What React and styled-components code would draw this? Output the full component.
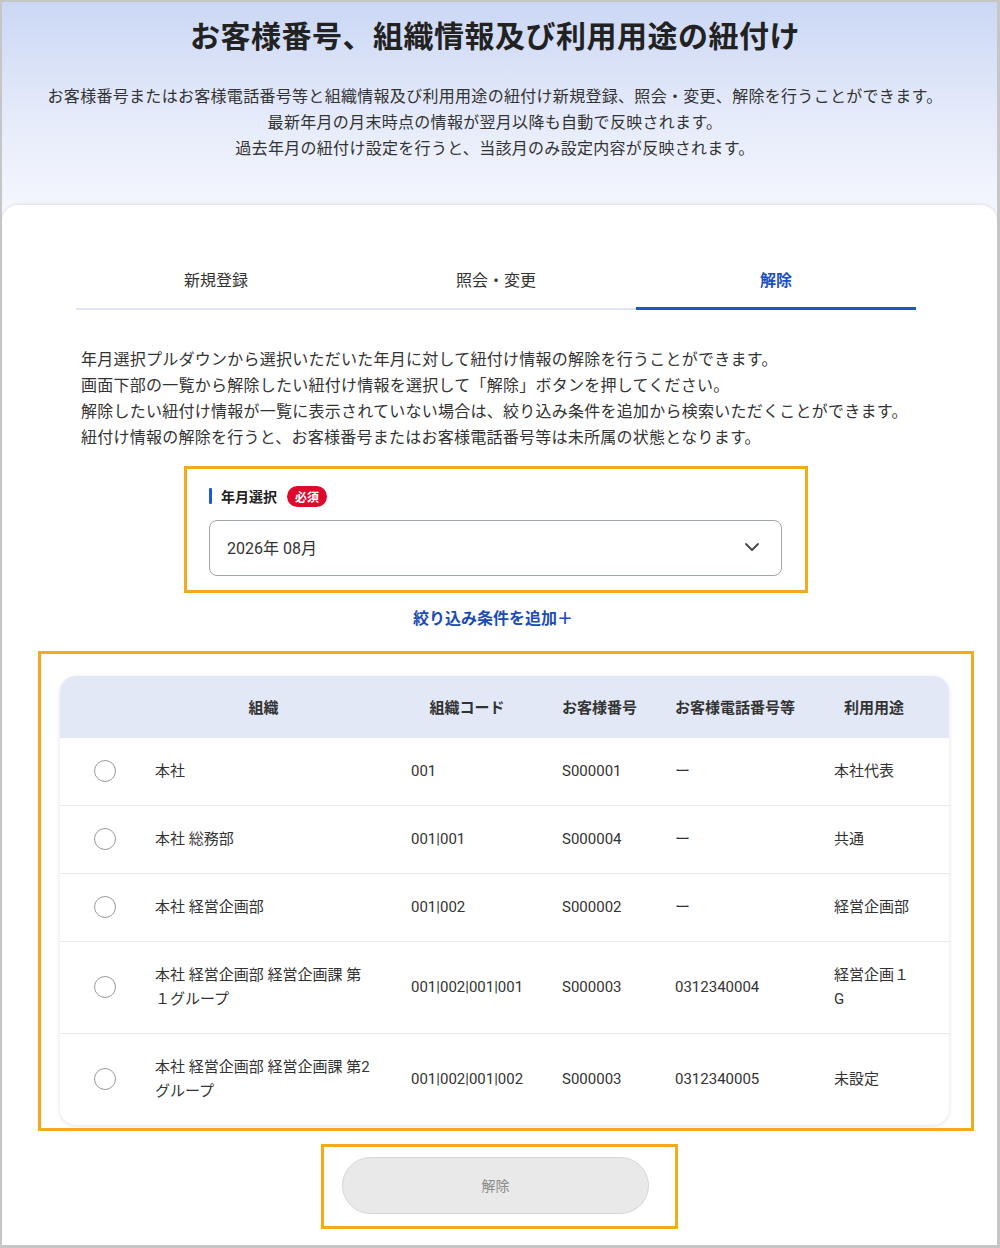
import React from 'react'
import styled, { createGlobalStyle } from 'styled-components'
import { ChevronDown } from 'lucide-react'

const GlobalStyle = createGlobalStyle`
	* {
		box-sizing: border-box;
	}
	body {
		margin: 0;
		background: #fff;
		font-family: Roboto, 'Noto Sans CJK JP', sans-serif;
		color: #333;
	}
`

const Frame = styled.div`
	width: 1000px;
	height: 1248px;
	border-style: solid;
	border-color: #c6c6c6;
	border-width: 2px 3px 3px 2px;
	background: linear-gradient(180deg, #cbd7f4 0px, #e4eafa 110px, #f5f7fd 210px, #f7f8fd 100%);
	display: flex;
	flex-direction: column;
	overflow: hidden;
`

const Hero = styled.header`
	padding: 14px 9px 43px 0;
	text-align: center;
`

const Title = styled.h1`
	margin: 0;
	font-size: 30px;
	line-height: 42px;
	font-weight: 700;
	color: #222;
	letter-spacing: 0.5px;
`

const Lead = styled.p`
	margin: 26px 0 0;
	font-size: 16px;
	line-height: 26px;
	letter-spacing: 0.3px;
	color: #333;
`

const Card = styled.main`
	flex: 1;
	background: #fff;
	border-radius: 16px 16px 0 0;
	box-shadow: 0 -1px 3px rgba(60, 70, 100, 0.12);
	padding: 48px 0 16px;
	display: flex;
	flex-direction: column;
	align-items: flex-start;
`

const Tabs = styled.nav`
	margin-left: 74px;
	width: 840px;
	display: grid;
	grid-template-columns: repeat(3, 1fr);
	border-bottom: 2px solid #dfe5f2;
`

const Tab = styled.div`
	position: relative;
	height: 55px;
	padding-bottom: 3px;
	display: flex;
	align-items: center;
	justify-content: center;
	font-size: 16px;
	font-weight: ${(p) => (p.$active ? 700 : 400)};
	color: ${(p) => (p.$active ? '#1b4fc2' : '#333')};

	&::after {
		content: '';
		display: ${(p) => (p.$active ? 'block' : 'none')};
		position: absolute;
		left: 0;
		right: 0;
		bottom: -2px;
		height: 3px;
		background: #1a56d2;
	}
`

const Instructions = styled.p`
	margin: 37px 0 0 79px;
	font-size: 16px;
	line-height: 26px;
	letter-spacing: 0.25px;
	color: #333;
`

const HighlightBox = styled.section`
	border: 3px solid #f4aa1f;
`

const FieldBox = styled(HighlightBox)`
	margin: 15px 0 0 182px;
	width: 624px;
	padding: 17px 23px 14px 22px;
`

const LabelRow = styled.div`
	display: flex;
	align-items: center;
	height: 20px;
	gap: 9px;
`

const LabelBar = styled.span`
	width: 3px;
	height: 16px;
	border-radius: 1px;
	background: #2059d6;
`

const LabelText = styled.span`
	font-size: 14px;
	font-weight: 700;
	color: #222;
`

const Required = styled.span`
	width: 40px;
	height: 21px;
	border-radius: 11px;
	background: #dc0b2d;
	color: #fff;
	font-size: 12px;
	font-weight: 700;
	display: flex;
	align-items: center;
	justify-content: center;
	margin-left: 1px;
`

const Select = styled.div`
	margin-top: 14px;
	height: 56px;
	border: 1px solid #a0a5b2;
	border-radius: 8px;
	padding: 0 17px 2px 17px;
	display: flex;
	align-items: center;
	justify-content: space-between;
	font-size: 16px;
	color: #333;

	svg {
		color: #444;
	}
`

const AddLink = styled.div`
	margin: 14px 0 0 74px;
	width: 840px;
	padding-right: 6px;
	text-align: center;
	font-size: 16px;
	line-height: 24px;
	font-weight: 700;
	color: #1d4cb5;
`

const TableBox = styled(HighlightBox)`
	margin: 20px 0 0 36px;
	width: 936px;
	padding: 22px 22px 3px 19px;
`

const Table = styled.div`
	width: 889px;
	border-radius: 16px;
	overflow: hidden;
	background: #fff;
	box-shadow: 0 1px 4px rgba(40, 50, 80, 0.14);
`

const columns = '80px 256px 151px 113px 159px 130px'

const HeadRow = styled.div`
	display: grid;
	grid-template-columns: ${columns};
	height: 62px;
	padding-bottom: 2px;
	align-items: center;
	background: #e2e8f6;
`

const HeadCell = styled.div`
	padding: 0 24px 0 15px;
	text-align: center;
	white-space: nowrap;
	font-size: 15px;
	font-weight: 700;
	color: #333;

	&:last-child {
		padding-right: 35px;
	}
`

const Row = styled.div`
	display: grid;
	grid-template-columns: ${columns};
	align-items: center;
	padding: 21px 0 22px;
	border-bottom: 1px solid #e7e9ee;

	&:last-child {
		border-bottom: none;
	}
`

const Cell = styled.div`
	padding: 0 24px 0 15px;
	font-size: 15px;
	line-height: 24px;
	color: #333;

	&:last-child {
		padding-right: 35px;
	}
`

const RadioCell = styled.div`
	padding-left: 34px;
	display: flex;
	align-items: center;
`

const Radio = styled.span`
	width: 22px;
	height: 22px;
	border-radius: 50%;
	border: 1.5px solid #9a9a9a;
	background: #fff;
`

const ButtonBox = styled(HighlightBox)`
	margin: 13px 0 0 319px;
	width: 357px;
	padding: 10px 26px 12px 18px;
`

const ReleaseButton = styled.button`
	width: 100%;
	height: 57px;
	padding-bottom: 3px;
	border-radius: 29px;
	border: 1px solid #d6d6d6;
	background: #e9e9e9;
	color: #8a8a8a;
	font-family: inherit;
	font-size: 14px;
	cursor: not-allowed;
`

const rows = [
	{ org: '本社', code: '001', no: 'S000001', tel: 'ー', use: '本社代表' },
	{ org: '本社 総務部', code: '001|001', no: 'S000004', tel: 'ー', use: '共通' },
	{ org: '本社 経営企画部', code: '001|002', no: 'S000002', tel: 'ー', use: '経営企画部' },
	{
		org: '本社 経営企画部 経営企画課 第１グループ',
		code: '001|002|001|001',
		no: 'S000003',
		tel: '0312340004',
		use: '経営企画１G',
	},
	{
		org: '本社 経営企画部 経営企画課 第2グループ',
		code: '001|002|001|002',
		no: 'S000003',
		tel: '0312340005',
		use: '未設定',
	},
]

function App() {
	return (
		<>
			<GlobalStyle />
			<Frame>
				<Hero>
					<Title>お客様番号、組織情報及び利用用途の紐付け</Title>
					<Lead>
						お客様番号またはお客様電話番号等と組織情報及び利用用途の紐付け新規登録、照会・変更、解除を行うことができます。
						<br />
						最新年月の月末時点の情報が翌月以降も自動で反映されます。
						<br />
						過去年月の紐付け設定を行うと、当該月のみ設定内容が反映されます。
					</Lead>
				</Hero>

				<Card>
					<Tabs>
						<Tab>新規登録</Tab>
						<Tab>照会・変更</Tab>
						<Tab $active>解除</Tab>
					</Tabs>

					<Instructions>
						年月選択プルダウンから選択いただいた年月に対して紐付け情報の解除を行うことができます。
						<br />
						画面下部の一覧から解除したい紐付け情報を選択して「解除」ボタンを押してください。
						<br />
						解除したい紐付け情報が一覧に表示されていない場合は、絞り込み条件を追加から検索いただくことができます。
						<br />
						紐付け情報の解除を行うと、お客様番号またはお客様電話番号等は未所属の状態となります。
					</Instructions>

					<FieldBox>
						<LabelRow>
							<LabelBar />
							<LabelText>年月選択</LabelText>
							<Required>必須</Required>
						</LabelRow>
						<Select>
							<span>2026年 08月</span>
							<ChevronDown size={24} strokeWidth={1.8} />
						</Select>
					</FieldBox>

					<AddLink>絞り込み条件を追加＋</AddLink>

					<TableBox>
						<Table>
							<HeadRow>
								<div />
								<HeadCell>組織</HeadCell>
								<HeadCell>組織コード</HeadCell>
								<HeadCell>お客様番号</HeadCell>
								<HeadCell>お客様電話番号等</HeadCell>
								<HeadCell>利用用途</HeadCell>
							</HeadRow>
							{rows.map((r, i) => (
								<Row key={i}>
									<RadioCell>
										<Radio />
									</RadioCell>
									<Cell>{r.org}</Cell>
									<Cell>{r.code}</Cell>
									<Cell>{r.no}</Cell>
									<Cell>{r.tel}</Cell>
									<Cell>{r.use}</Cell>
								</Row>
							))}
						</Table>
					</TableBox>

					<ButtonBox>
						<ReleaseButton disabled>解除</ReleaseButton>
					</ButtonBox>
				</Card>
			</Frame>
		</>
	)
}

export default App
